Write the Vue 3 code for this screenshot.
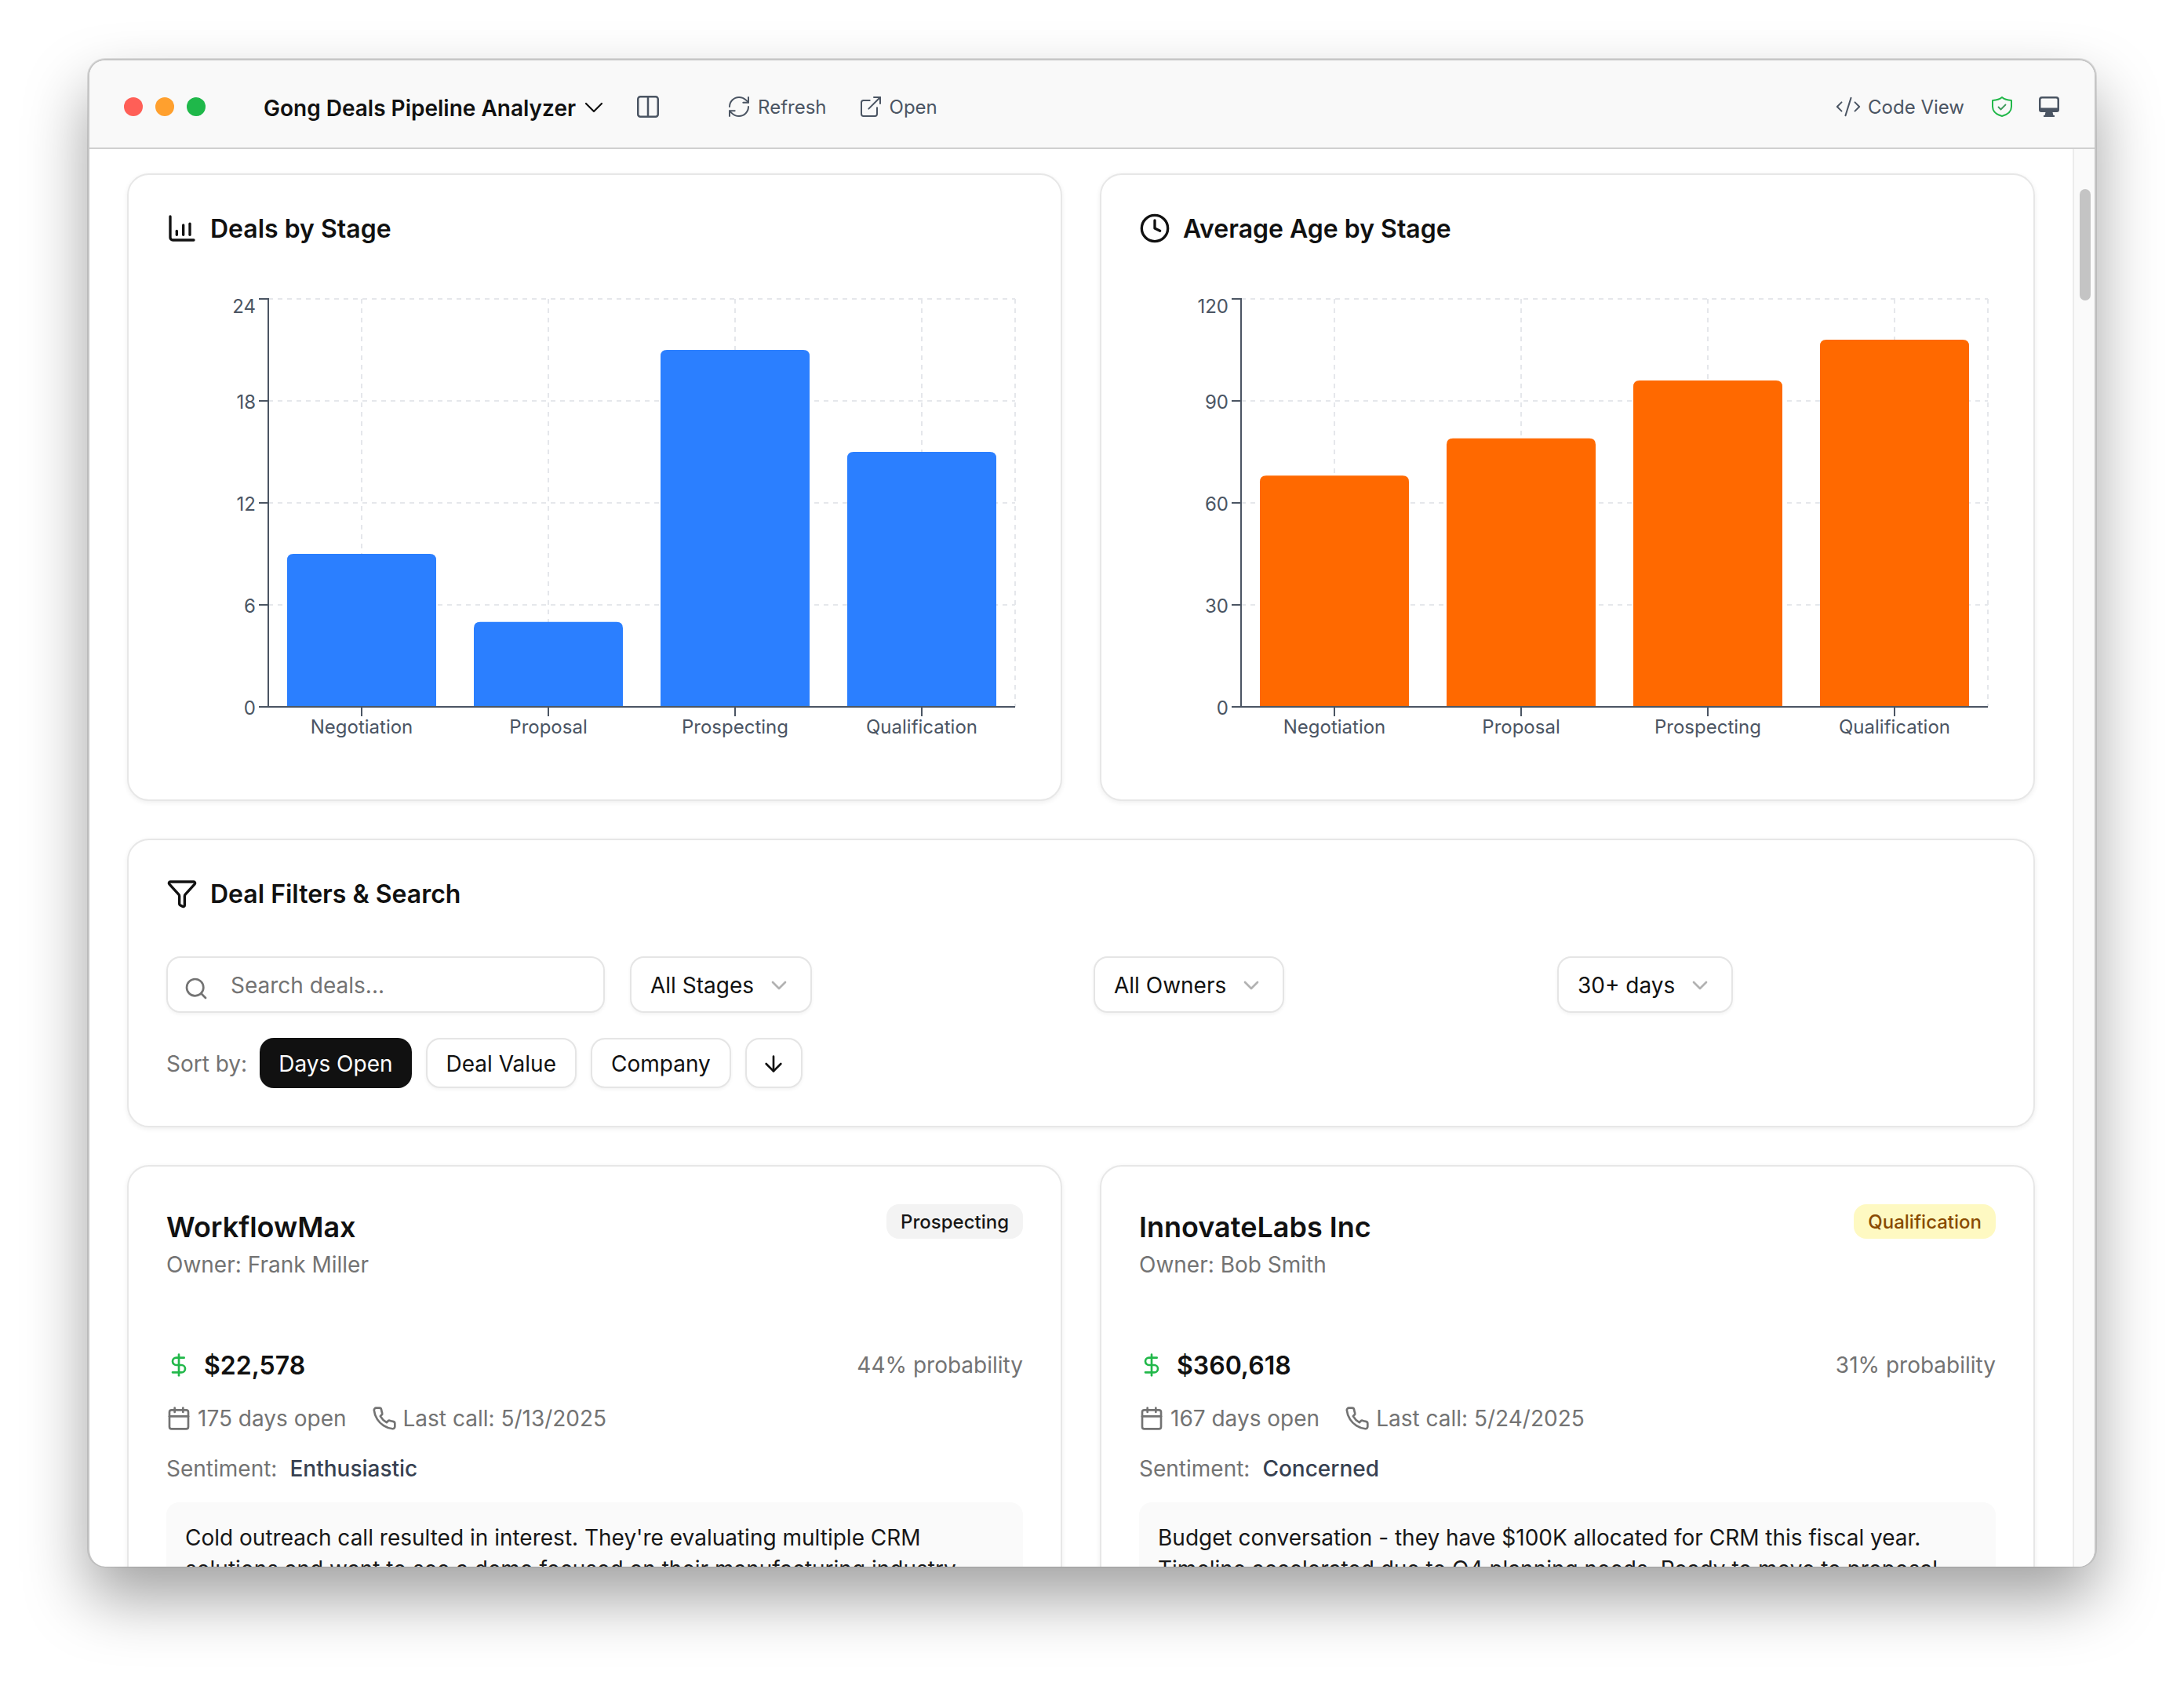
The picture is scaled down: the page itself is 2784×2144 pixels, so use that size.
<script setup>
const stages = ['Negotiation', 'Proposal', 'Prospecting', 'Qualification']

const plot = { left: 130, right: 1082, top: 10, bottom: 530 }
const bandW = (plot.right - plot.left) / 4
const plotH = plot.bottom - plot.top

function buildChart(title, icon, color, max, step, values) {
  const ticks = []
  for (let v = 0; v <= max; v += step) {
    const y = plot.bottom - (v / max) * plotH
    ticks.push({ v, y, labelY: v === max ? y + 18 : y + 10 })
  }
  const bars = values.map((v, i) => {
    const h = (v / max) * plotH
    return {
      label: stages[i],
      x: plot.left + bandW * i + 24,
      cx: plot.left + bandW * i + bandW / 2,
      y: plot.bottom - h,
      h
    }
  })
  return { title, icon, color, ticks, bars }
}

const charts = [
  buildChart('Deals by Stage', 'bars', '#2b7fff', 24, 6, [9, 5, 21, 15]),
  buildChart('Average Age by Stage', 'clock', '#ff6900', 120, 30, [68, 79, 96, 108])
]

function barPath(b) {
  const r = 8
  const w = 190
  return `M${b.x} ${b.y + b.h}V${b.y + r}Q${b.x} ${b.y} ${b.x + r} ${b.y}H${b.x + w - r}Q${b.x + w} ${b.y} ${b.x + w} ${b.y + r}V${b.y + b.h}Z`
}

const selects = [
  { label: 'All Stages' },
  { label: 'All Owners' },
  { label: '30+ days' }
]

const sorts = [
  { label: 'Days Open', active: true },
  { label: 'Deal Value', active: false },
  { label: 'Company', active: false }
]

const deals = [
  {
    company: 'WorkflowMax',
    owner: 'Frank Miller',
    stage: 'Prospecting',
    stageClass: 'badge-gray',
    value: '$22,578',
    prob: '44% probability',
    days: '175 days open',
    call: 'Last call: 5/13/2025',
    sentiment: 'Enthusiastic',
    note: "Cold outreach call resulted in interest. They're evaluating multiple CRM solutions and want to see a demo focused on their manufacturing industry."
  },
  {
    company: 'InnovateLabs Inc',
    owner: 'Bob Smith',
    stage: 'Qualification',
    stageClass: 'badge-yellow',
    value: '$360,618',
    prob: '31% probability',
    days: '167 days open',
    call: 'Last call: 5/24/2025',
    sentiment: 'Concerned',
    note: 'Budget conversation - they have $100K allocated for CRM this fiscal year. Timeline accelerated due to Q4 planning needs. Ready to move to proposal stage.'
  }
]
</script>

<template>
  <div class="page">
    <div class="window">
      <header class="titlebar">
        <div class="lights">
          <span class="light red"></span>
          <span class="light orange"></span>
          <span class="light green"></span>
        </div>
        <span class="app-title">Gong Deals Pipeline Analyzer</span>
        <svg class="title-chevron" width="40" height="40" viewBox="0 0 24 24" fill="none" stroke="#111" stroke-width="1.3" stroke-linecap="round" stroke-linejoin="round"><path d="m6 9 6 6 6-6"/></svg>
        <svg class="panel-icon" width="28" height="28" viewBox="0 0 28 28" fill="none" stroke="#4b5563" stroke-width="2.5" stroke-linejoin="round"><rect x="1.25" y="1.25" width="25.5" height="25.5" rx="3"/><path d="M14 1.25v25.5"/></svg>
        <button class="tool tool-refresh">
          <svg width="32" height="32" viewBox="0 0 24 24" fill="none" stroke="#4b5563" stroke-width="1.5" stroke-linecap="round" stroke-linejoin="round"><path d="M3 12a9 9 0 0 1 9-9 9.75 9.75 0 0 1 6.74 2.74L21 8"/><path d="M21 3v5h-5"/><path d="M21 12a9 9 0 0 1-9 9 9.75 9.75 0 0 1-6.74-2.74L3 16"/><path d="M8 16H3v5"/></svg>
          <span>Refresh</span>
        </button>
        <button class="tool tool-open">
          <svg width="32" height="32" viewBox="0 0 24 24" fill="none" stroke="#4b5563" stroke-width="1.5" stroke-linecap="round" stroke-linejoin="round"><path d="M18 13v6a2 2 0 0 1-2 2H5a2 2 0 0 1-2-2V8a2 2 0 0 1 2-2h6"/><path d="M15 3h6v6"/><path d="M10 14 21 3"/></svg>
          <span>Open</span>
        </button>
        <div class="titlebar-right">
          <button class="tool tool-code">
            <svg width="34" height="34" viewBox="0 0 24 24" fill="none" stroke="#4b5563" stroke-width="1.4" stroke-linecap="round" stroke-linejoin="round"><path d="m18 16 4-4-4-4"/><path d="m6 8-4 4 4 4"/><path d="m14.5 4-5 16"/></svg>
            <span>Code View</span>
          </button>
          <svg class="shield" width="26" height="26" viewBox="0 0 26 26" fill="none" stroke-linecap="round" stroke-linejoin="round"><path d="M13 1C15.8 3.4 19.5 4.6 25 5v8c0 6-4.8 10-12 12C5.800 23 1 19 1 13V5c5.500-.4 9.200-1.600 12-4Z" stroke="#22b84a" stroke-width="2"/><path d="m8.500 13.500 3 3L17.500 10.500" stroke="#3f9a5c" stroke-width="1.800"/></svg>
          <svg class="monitor" width="26" height="26" viewBox="0 0 26 26" fill="#4b5563"><path d="M4 0h18a4 4 0 0 1 4 4v13a3 3 0 0 1-3 3H3a3 3 0 0 1-3-3V4a4 4 0 0 1 4-4Zm0 2.500A1.500 1.500 0 0 0 2.500 4v10.500h21V4A1.500 1.500 0 0 0 22 2.500Z" fill-rule="evenodd"/><path d="M8.500 20h9l1 4h1.500v2H6v-2h1.500Z"/></svg>
        </div>
      </header>

      <div class="body">
        <main class="content">
          <section class="grid-two">
            <article v-for="c in charts" :key="c.title" class="card">
              <h2 class="card-title">
                <svg v-if="c.icon === 'bars'" width="40" height="40" viewBox="0 0 24 24" fill="none" stroke="#111" stroke-width="2" stroke-linecap="round" stroke-linejoin="round"><path d="M3 3v16a2 2 0 0 0 2 2h16"/><path d="M18 17V8.500"/><path d="M13 17V9.500"/><path d="M8 17v-3"/></svg>
                <svg v-else width="40" height="40" viewBox="0 0 24 24" fill="none" stroke="#111" stroke-width="2" stroke-linecap="round" stroke-linejoin="round"><circle cx="12" cy="12" r="10"/><path d="M12 6v6l4 2"/></svg>
                <span class="title-text">{{ c.title }}</span>
              </h2>
              <svg class="chart" width="1092" height="600" viewBox="0 0 1092 600">
                <g stroke="#e5e7eb" stroke-width="2" stroke-dasharray="6 6" fill="none">
                  <line v-for="t in c.ticks" :key="'h' + t.v" :x1="plot.left" :x2="plot.right" :y1="t.y" :y2="t.y" />
                  <line v-for="b in c.bars" :key="'v' + b.label" :x1="b.cx" :x2="b.cx" :y1="plot.top" :y2="plot.bottom" />
                  <line :x1="plot.right" :x2="plot.right" :y1="plot.top" :y2="plot.bottom" />
                </g>
                <path v-for="b in c.bars" :key="'b' + b.label" :d="barPath(b)" :fill="c.color" />
                <g stroke="#4b5563" stroke-width="2">
                  <line :x1="plot.left" :x2="plot.left" :y1="plot.top - 1" :y2="plot.bottom + 1" />
                  <line :x1="plot.left" :x2="plot.right" :y1="plot.bottom" :y2="plot.bottom" />
                  <line v-for="t in c.ticks" :key="'yt' + t.v" :x1="plot.left - 12" :x2="plot.left" :y1="t.y" :y2="t.y" />
                  <line v-for="b in c.bars" :key="'xt' + b.label" :x1="b.cx" :x2="b.cx" :y1="plot.bottom" :y2="plot.bottom + 12" />
                </g>
                <text v-for="t in c.ticks" :key="'yl' + t.v" class="tick" :x="plot.left - 16" :y="t.labelY" text-anchor="end">{{ t.v }}</text>
                <text v-for="b in c.bars" :key="'xl' + b.label" class="tick" :x="b.cx" :y="plot.bottom + 34" text-anchor="middle">{{ b.label }}</text>
              </svg>
            </article>
          </section>

          <section class="card filter-card">
            <h2 class="card-title">
              <svg width="40" height="40" viewBox="0 0 24 24" fill="none" stroke="#111" stroke-width="2" stroke-linecap="round" stroke-linejoin="round"><path d="M10 20a1 1 0 0 0 .553.895l2 1A1 1 0 0 0 14 21v-7a2 2 0 0 1 .517-1.341L21.74 4.67A1 1 0 0 0 21 3H3a1 1 0 0 0-.742 1.67l7.225 7.989A2 2 0 0 1 10 14z"/></svg>
              <span class="title-text">Deal Filters &amp; Search</span>
            </h2>
            <div class="filter-grid">
              <div class="search">
                <svg class="search-icon" width="32" height="32" viewBox="0 0 24 24" fill="none" stroke="#737373" stroke-width="2" stroke-linecap="round" stroke-linejoin="round"><circle cx="11" cy="11" r="8"/><path d="m21 21-4.300-4.300"/></svg>
                <input class="search-input" type="text" placeholder="Search deals..." />
              </div>
              <div v-for="s in selects" :key="s.label" class="select-cell">
                <button class="select">
                  <span>{{ s.label }}</span>
                  <svg width="32" height="32" viewBox="0 0 24 24" fill="none" stroke="#737373" stroke-opacity="0.55" stroke-width="2" stroke-linecap="round" stroke-linejoin="round"><path d="m6 9 6 6 6-6"/></svg>
                </button>
              </div>
            </div>
            <div class="sort-row">
              <span class="sort-label">Sort by:</span>
              <button v-for="s in sorts" :key="s.label" class="sort-btn" :class="{ active: s.active }">{{ s.label }}</button>
              <button class="sort-btn sort-arrow">
                <svg width="32" height="32" viewBox="0 0 24 24" fill="none" stroke="#111" stroke-width="2" stroke-linecap="round" stroke-linejoin="round"><path d="M12 5v14"/><path d="m19 12-7 7-7-7"/></svg>
              </button>
            </div>
          </section>

          <section class="grid-two">
            <article v-for="d in deals" :key="d.company" class="card deal">
              <div class="deal-head">
                <div class="deal-names">
                  <h3 class="company">{{ d.company }}</h3>
                  <p class="owner">Owner: {{ d.owner }}</p>
                </div>
                <span class="badge" :class="d.stageClass">{{ d.stage }}</span>
              </div>
              <div class="value-row">
                <div class="value">
                  <svg width="32" height="32" viewBox="0 0 24 24" fill="none" stroke="#22b84a" stroke-width="2" stroke-linecap="round" stroke-linejoin="round"><path d="M12 2v20"/><path d="M17 5H9.500a3.500 3.500 0 0 0 0 7h5a3.500 3.500 0 0 1 0 7H6"/></svg>
                  <span>{{ d.value }}</span>
                </div>
                <span class="prob">{{ d.prob }}</span>
              </div>
              <div class="meta-row">
                <span class="meta">
                  <svg width="32" height="32" viewBox="0 0 24 24" fill="none" stroke="#737373" stroke-width="2" stroke-linecap="round" stroke-linejoin="round"><path d="M8 2v4"/><path d="M16 2v4"/><rect x="3" y="4" width="18" height="18" rx="2"/><path d="M3 10h18"/></svg>
                  {{ d.days }}
                </span>
                <span class="meta">
                  <svg width="32" height="32" viewBox="0 0 24 24" fill="none" stroke="#737373" stroke-width="2" stroke-linecap="round" stroke-linejoin="round"><path d="M22 16.920v3a2 2 0 0 1-2.180 2 19.790 19.790 0 0 1-8.630-3.070 19.500 19.500 0 0 1-6-6 19.790 19.790 0 0 1-3.070-8.670A2 2 0 0 1 4.110 2h3a2 2 0 0 1 2 1.720 12.840 12.840 0 0 0 .7 2.810 2 2 0 0 1-.45 2.110L8.090 9.910a16 16 0 0 0 6 6l1.270-1.270a2 2 0 0 1 2.110-.45 12.840 12.840 0 0 0 2.810.7A2 2 0 0 1 22 16.920z"/></svg>
                  {{ d.call }}
                </span>
              </div>
              <div class="sentiment">
                <span class="sent-label">Sentiment:</span>
                <span class="sent-value">{{ d.sentiment }}</span>
              </div>
              <div class="note">{{ d.note }}</div>
            </article>
          </section>
        </main>
        <div class="scrollbar"><div class="thumb"></div></div>
      </div>
    </div>
  </div>
</template>

<style>
html, body { margin: 0; background: #fff; }
</style>

<style scoped>
* { box-sizing: border-box; }
.page {
  width: 2784px;
  height: 2144px;
  padding: 75px 112px 0;
  background: #fff;
  overflow: hidden;
  font-family: Inter, "Liberation Sans", sans-serif;
  color: #111;
}
.window {
  width: 2560px;
  height: 1922px;
  border: 2px solid #c6c6c6;
  border-bottom: 0;
  border-radius: 22px;
  background: #fff;
  box-shadow: 0 0 0 1px rgba(0, 0, 0, 0.1), 0 40px 80px rgba(0, 0, 0, 0.37);
  overflow: hidden;
  display: flex;
  flex-direction: column;
}
.titlebar {
  height: 113px;
  flex: none;
  background: #f9f9f9;
  border-bottom: 2px solid #d0d0d0;
  display: flex;
  align-items: center;
  padding: 7px 0 0 44px;
}
.lights { display: flex; gap: 16px; }
.light { width: 24px; height: 24px; border-radius: 50%; }
.red { background: #ff5f57; }
.orange { background: #ffa02e; }
.green { background: #1fb84a; }
.app-title {
  margin-left: 74px;
  font-size: 28px;
  font-weight: 600;
  line-height: 40px;
  position: relative;
  top: 2px;
}
.title-chevron { margin-left: 3px; position: relative; top: 1px; }
.panel-icon { margin-left: 35px; }
.tool {
  display: flex;
  align-items: center;
  gap: 8px;
  padding: 0;
  border: 0;
  background: none;
  font: inherit;
  font-size: 24px;
  color: #4b5563;
}
.tool-refresh { margin-left: 86px; }
.tool-open { margin-left: 40px; }
.titlebar-right {
  margin-left: auto;
  padding-right: 45px;
  display: flex;
  align-items: center;
}
.shield { margin-left: 35px; }
.monitor { margin-left: 34px; }
.body { flex: 1; min-height: 0; display: flex; }
.content {
  flex: 1;
  min-width: 0;
  padding: 31px 48px 0;
  overflow: hidden;
  display: flex;
  flex-direction: column;
  gap: 48px;
}
.scrollbar {
  width: 28px;
  flex: none;
  background: #fafafa;
  border-left: 2px solid #ececec;
  padding: 51px 5px 0 7px;
}
.thumb { height: 142px; border-radius: 8px; background: #c4c4c4; }
.grid-two { display: grid; grid-template-columns: 1fr 1fr; gap: 48px; flex: none; }
.card {
  background: #fff;
  border: 2px solid #e7e7e7;
  border-radius: 28px;
  padding: 48px;
  box-shadow: 0 2px 6px rgba(0, 0, 0, 0.07);
}
.card-title {
  margin: 0 0 48px;
  height: 52px;
  display: flex;
  align-items: flex-start;
  gap: 16px;
  font-size: 32px;
  font-weight: 600;
  line-height: 40px;
}
.title-text { padding-top: 1px; }
.chart { display: block; }
.tick { font-size: 24px; fill: #4b5563; font-family: Inter, "Liberation Sans", sans-serif; }
.filter-card { flex: none; }
.filter-grid { display: grid; grid-template-columns: repeat(4, 1fr); gap: 32px; }
.search { position: relative; }
.search-icon { position: absolute; left: 22px; top: 25px; }
.search-input {
  width: 100%;
  height: 72px;
  padding: 2px 24px 0 80px;
  border: 2px solid #e5e5e5;
  border-radius: 18px;
  background: #fff;
  box-shadow: 0 2px 4px rgba(0, 0, 0, 0.05);
  font: inherit;
  font-size: 28px;
  color: #111;
  outline: none;
}
.search-input::placeholder { color: #737373; opacity: 1; }
.select-cell { display: flex; }
.select {
  height: 72px;
  display: flex;
  align-items: center;
  gap: 16px;
  padding: 2px 24px 0;
  border: 2px solid #e5e5e5;
  border-radius: 18px;
  background: #fff;
  box-shadow: 0 2px 4px rgba(0, 0, 0, 0.05);
  font: inherit;
  font-size: 28px;
  color: #111;
}
.sort-row { margin-top: 32px; display: flex; align-items: center; gap: 18px; }
.sort-label { font-size: 28px; color: #737373; margin-right: -2px; padding-top: 2px; }
.sort-btn {
  height: 64px;
  padding: 2px 24px 0;
  display: flex;
  align-items: center;
  border: 2px solid #e5e5e5;
  border-radius: 18px;
  background: #fff;
  box-shadow: 0 2px 4px rgba(0, 0, 0, 0.05);
  font: inherit;
  font-size: 28px;
  color: #111;
}
.sort-btn.active { background: #111; border: 0; color: #fff; box-shadow: none; }
.sort-arrow { padding: 2px 18.500px 0; }
.deal { padding-bottom: 48px; }
.deal-head { display: flex; justify-content: space-between; align-items: flex-start; }
.deal-names { padding-top: 1px; margin-bottom: -1px; }
.company { margin: 0; font-size: 36px; line-height: 56px; font-weight: 600; }
.owner { margin: 0; font-size: 28px; line-height: 40px; color: #737373; }
.badge {
  height: 44px;
  padding: 0 18px;
  display: flex;
  align-items: center;
  border-radius: 16px;
  font-size: 24px;
  font-weight: 500;
}
.badge-gray { background: #f3f3f3; color: #171717; }
.badge-yellow { background: #fef9c2; color: #894b00; }
.value-row {
  margin-top: 80px;
  height: 56px;
  padding-top: 2px;
  display: flex;
  justify-content: space-between;
  align-items: center;
}
.value { display: flex; align-items: center; gap: 16px; font-size: 32px; font-weight: 600; }
.prob { font-size: 28px; color: #737373; }
.meta-row { margin-top: 20px; height: 40px; padding-top: 2px; display: flex; align-items: center; gap: 32px; }
.meta { display: flex; align-items: center; gap: 8px; font-size: 28px; color: #737373; }
.sentiment { margin-top: 24px; height: 40px; padding-top: 2px; display: flex; align-items: center; gap: 16px; font-size: 28px; }
.sent-label { color: #737373; }
.sent-value { color: #374151; font-weight: 500; }
.note {
  margin-top: 24px;
  padding: 25px 24px 23px;
  border-radius: 16px;
  background: #fafafa;
  font-size: 28px;
  line-height: 40px;
  color: #171717;
}
</style>
